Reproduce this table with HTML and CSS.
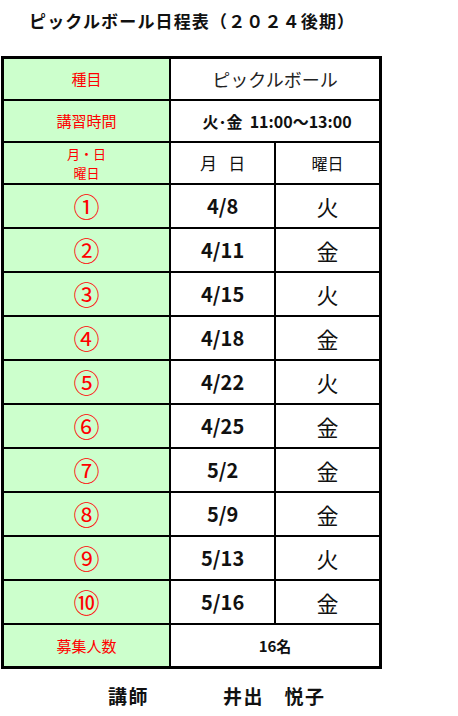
FILE: index.html
```html
<!DOCTYPE html>
<html lang="ja">
<head>
<meta charset="utf-8">
<link rel="stylesheet" href="styles.css">
</head>
<body>
<h1 class="title">ピックルボール日程表（２０２４後期）</h1>
<table class="sched">
  <tr class="hrow">
    <th class="lab">種目</th>
    <td colspan="2" class="sport">ピックルボール</td>
  </tr>
  <tr class="hrow">
    <th class="lab">講習時間</th>
    <td colspan="2" class="time">火･金&nbsp;&nbsp;11:00～13:00</td>
  </tr>
  <tr class="hrow">
    <th class="lab two">月・日<br>曜日</th>
    <td class="sub">月&nbsp;&nbsp;&nbsp;日</td>
    <td class="sub sub2">曜日</td>
  </tr>
  <tr class="drow"><th class="num">①</th><td class="date">4/8</td><td class="dow">火</td></tr>
  <tr class="drow"><th class="num">②</th><td class="date">4/11</td><td class="dow">金</td></tr>
  <tr class="drow"><th class="num">③</th><td class="date">4/15</td><td class="dow">火</td></tr>
  <tr class="drow"><th class="num">④</th><td class="date">4/18</td><td class="dow">金</td></tr>
  <tr class="drow"><th class="num">⑤</th><td class="date">4/22</td><td class="dow">火</td></tr>
  <tr class="drow"><th class="num">⑥</th><td class="date">4/25</td><td class="dow">金</td></tr>
  <tr class="drow"><th class="num">⑦</th><td class="date">5/2</td><td class="dow">金</td></tr>
  <tr class="drow"><th class="num">⑧</th><td class="date">5/9</td><td class="dow">金</td></tr>
  <tr class="drow"><th class="num">⑨</th><td class="date">5/13</td><td class="dow">火</td></tr>
  <tr class="drow"><th class="num">⑩</th><td class="date">5/16</td><td class="dow">金</td></tr>
  <tr class="drow">
    <th class="lab">募集人数</th>
    <td colspan="2" class="cap">16名</td>
  </tr>
</table>
<div class="teacher">
  <span class="role">講師</span>
  <span class="name">井出　悦子</span>
</div>
</body>
</html>
```
FILE: styles.css
```css
html, body {
  margin: 0;
  padding: 0;
  background: #fff;
}
body {
  font-family: "Noto Sans CJK JP", "Noto Sans", sans-serif;
  color: #111;
  width: 458px;
  height: 716px;
  overflow: hidden;
}
.title {
  margin: 0;
  padding: 9px 0 0 29px;
  height: 56px;
  box-sizing: border-box;
  font-size: 17px;
  font-weight: 700;
  letter-spacing: 1.15px;
  line-height: 24px;
  color: #111;
}
.sched {
  margin: 0 0 0 1px;
  border-collapse: collapse;
  border: 3px solid #000;
  width: 381px;
  table-layout: fixed;
}
.sched th, .sched td {
  border: 2px solid #000;
  padding: 0;
  text-align: center;
  vertical-align: middle;
  line-height: 1;
}
.sched th {
  background: #ccffcc;
  color: #f00;
  font-weight: 400;
  width: 165px;
}
.hrow { height: 42px; }
.drow { height: 44px; }
.lab {
  font-size: 15px;
}
.lab.two {
  line-height: 19px;
  font-size: 13px;
}
.sport {
  font-size: 18px;
  color: #222;
}
.time {
  font-size: 16px;
  font-weight: 700;
  padding-left: 4px !important;
}
.sub {
  font-size: 17px;
  width: 103px;
}
.sub2 {
  font-size: 16px;
}
.num {
  font-size: 26px;
}
.date {
  font-size: 20px;
  font-weight: 700;
}
.dow {
  font-size: 22px;
}
.cap {
  font-size: 15px;
  font-weight: 700;
}
.teacher {
  display: flex;
  padding: 14px 0 0 108px;
  font-size: 19px;
  font-weight: 700;
  line-height: 26px;
  letter-spacing: 1.5px;
}
.role {
  width: 115px;
}
```
